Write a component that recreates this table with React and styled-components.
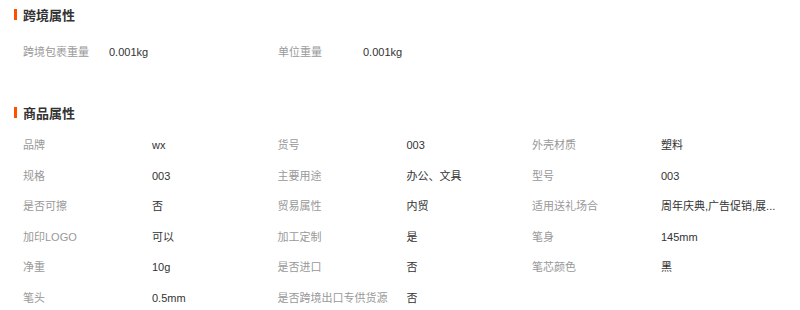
import styled, { createGlobalStyle } from "styled-components";

const crossBorder = [
  ["跨境包裹重量", "0.001kg"],
  ["单位重量", "0.001kg"],
];

const goods = [
  ["品牌", "wx"],
  ["货号", "003"],
  ["外壳材质", "塑料"],
  ["规格", "003"],
  ["主要用途", "办公、文具"],
  ["型号", "003"],
  ["是否可擦", "否"],
  ["贸易属性", "内贸"],
  ["适用送礼场合", "周年庆典,广告促销,展..."],
  ["加印LOGO", "可以"],
  ["加工定制", "是"],
  ["笔身", "145mm"],
  ["净重", "10g"],
  ["是否进口", "否"],
  ["笔芯颜色", "黑"],
  ["笔头", "0.5mm"],
  ["是否跨境出口专供货源", "否"],
];

function App() {
  return (
    <>
      <GlobalStyle />
      <StPage>
        <StTitle>跨境属性</StTitle>
        <StCrossGrid>
          {crossBorder.map(([k, v]) => (
            <StPair key={k}>
              <StLabel>{k}</StLabel>
              <StValue>{v}</StValue>
            </StPair>
          ))}
        </StCrossGrid>

        <StTitle $gap>商品属性</StTitle>
        <StGoodsGrid>
          {goods.map(([k, v]) => (
            <StPair key={k}>
              <StLabel>{k}</StLabel>
              <StValue>{v}</StValue>
            </StPair>
          ))}
        </StGoodsGrid>
      </StPage>
    </>
  );
}

export default App;

const GlobalStyle = createGlobalStyle`
  body {
    margin: 0;
    background: #fff;
    font-family: "Liberation Sans", "Noto Sans CJK SC", sans-serif;
  }
`;

const StPage = styled.div`
  width: 800px;
  height: 310px;
  overflow: hidden;
  padding: 6px 0 0 14px;
  box-sizing: border-box;
`;

const StTitle = styled.h2`
  display: flex;
  align-items: center;
  gap: 6px;
  margin: ${(p) => (p.$gap ? "37px" : "0")} 0 0;
  height: 16px;
  font-size: 13px;
  font-weight: bold;
  color: #333;
  font-family: "Noto Sans CJK SC", sans-serif;

  &::before {
    content: "";
    width: 3px;
    height: 11px;
    background: #ff5000;
  }
`;

const StCrossGrid = styled.div`
  display: grid;
  grid-template-columns: 86px 169px 85px 1fr;
  margin-top: 15px;
  padding-left: 9px;

  & > div {
    display: contents;
  }
`;

const StGoodsGrid = styled.div`
  display: grid;
  grid-template-columns: repeat(3, 129px 125.5px);
  grid-auto-rows: 30.6px;
  margin-top: 10px;
  padding-left: 9px;

  & > div {
    display: contents;
  }
`;

const StPair = styled.div``;

const StLabel = styled.div`
  font-size: 11px;
  line-height: 30px;
  color: #999;
  white-space: nowrap;
`;

const StValue = styled.div`
  font-size: 11px;
  line-height: 30px;
  color: #333;
  white-space: nowrap;
`;
